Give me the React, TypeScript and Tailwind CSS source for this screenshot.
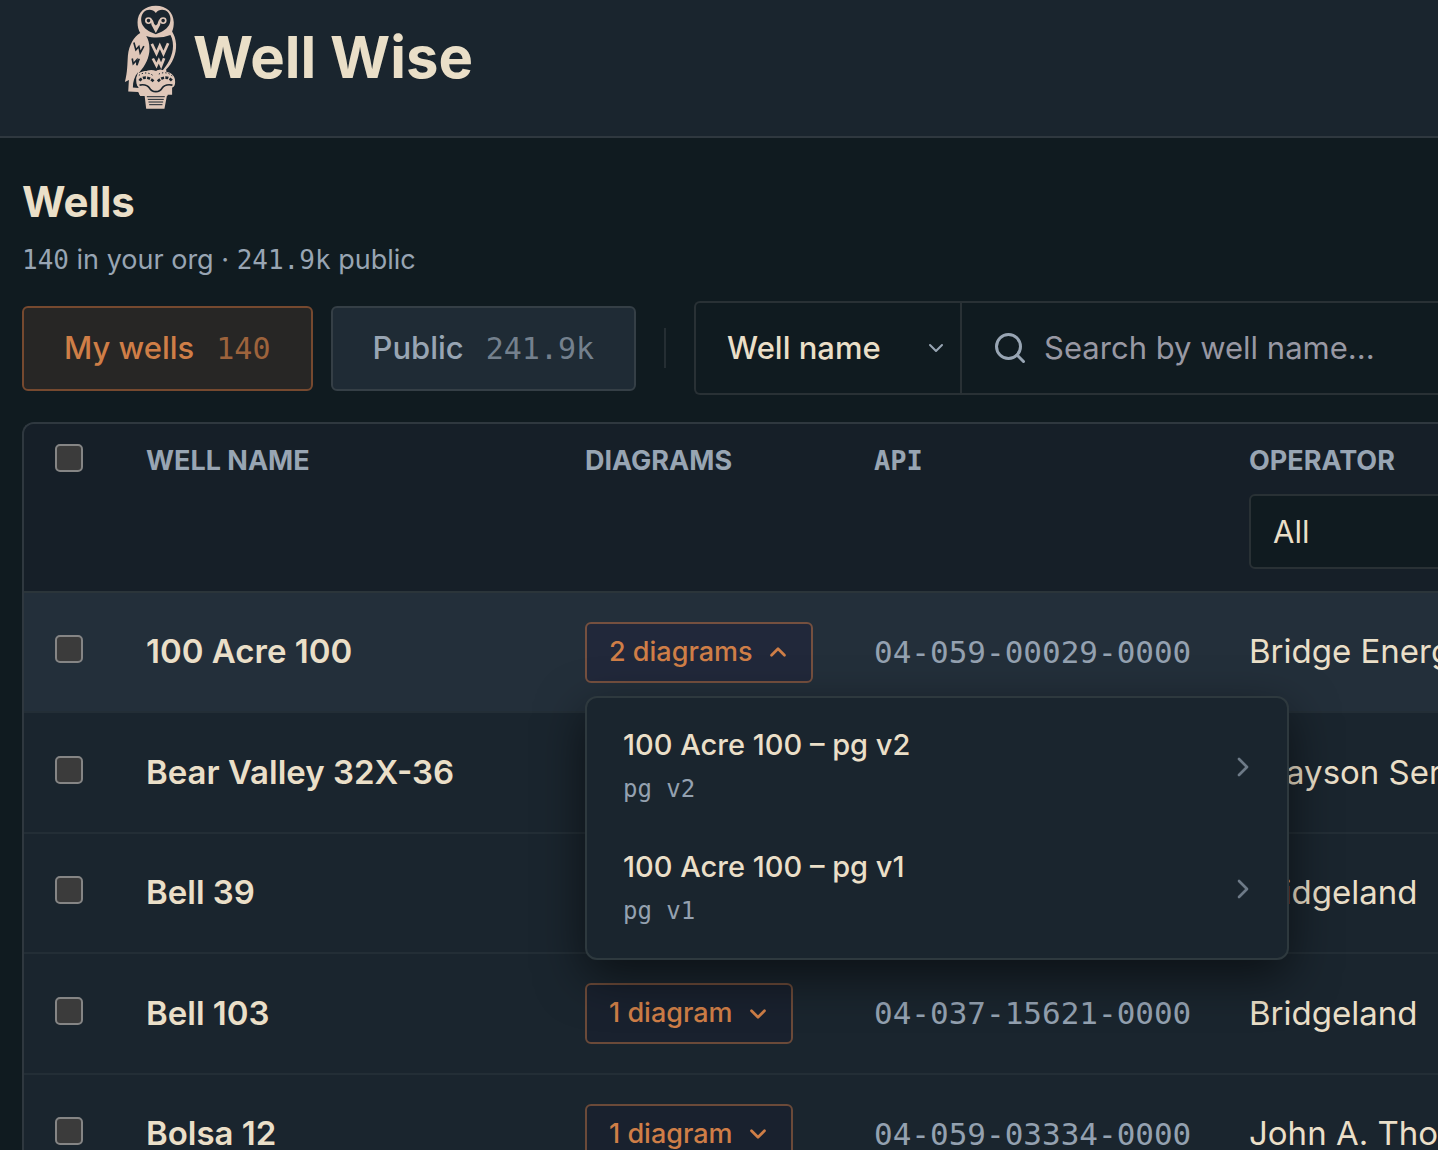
import { useState } from "react";
import { ChevronDown, ChevronRight, ChevronUp, Search } from "lucide-react";

type Diagram = { title: string; version: string };
type Well = {
  name: string;
  api?: string;
  operator: string;
  diagramLabel?: string;
  diagrams?: Diagram[];
};

const wells: Well[] = [
  {
    name: "100 Acre 100",
    api: "04-059-00029-0000",
    operator: "Bridge Energy",
    diagramLabel: "2 diagrams",
    diagrams: [
      { title: "100 Acre 100 – pg v2", version: "pg v2" },
      { title: "100 Acre 100 – pg v1", version: "pg v1" },
    ],
  },
  { name: "Bear Valley 32X-36", operator: "Grayson Service" },
  { name: "Bell 39", operator: "Bridgeland" },
  { name: "Bell 103", api: "04-037-15621-0000", operator: "Bridgeland", diagramLabel: "1 diagram" },
  { name: "Bolsa 12", api: "04-059-03334-0000", operator: "John A. Thomas", diagramLabel: "1 diagram" },
];

const mono = "font-['DejaVu_Sans_Mono',monospace]";

function OwlLogo() {
  return (
    <svg viewBox="42 14 158 316" className="h-[105px] w-[53px] shrink-0" aria-hidden="true">
      {/* body, wing and tail */}
      <path
        fill="#dfc7b9"
        d="M137 16C104 16 82 36 82 66C82 80 85 90 90 98C72 108 56 134 53 166C51 194 52 214 44 246L56 240L54 274L84 276L90 288L172 288L176 262L168 208C188 188 199 162 198 132C197 116 192 104 186 94C190 84 191 76 191 66C190 36 170 16 137 16Z"
      />
      {/* belly */}
      <path
        fill="#1a252e"
        d="M108 107C130 114 158 113 181 104C188 116 190 134 188 148C184 174 172 194 158 210C150 206 144 210 138 213C124 207 112 210 104 216L86 219C106 196 118 172 118 146C118 130 114 116 108 107Z"
      />
      {/* gap between the tail and the plinth */}
      <path fill="#1a252e" d="M84 216L78 234L80 254L86 264L68 262C68 246 72 230 84 216Z" />
      {/* face */}
      <path
        fill="#1a252e"
        d="M137 38C129 26 111 25 101 35C91 46 91 62 97 74C106 90 124 96 137 102C150 96 168 90 177 74C183 62 183 46 173 35C163 25 145 26 137 38Z"
      />
      <g fill="none" stroke="#dfc7b9" strokeWidth="5">
        <circle cx="115" cy="61" r="8" />
        <circle cx="159" cy="61" r="8" />
      </g>
      <path fill="#dfc7b9" d="M121 54C128 57 130 64 132 71L137 76L142 71C144 64 146 57 153 54L150 74L137 98L124 74Z" />
      {/* feather marks */}
      <g fill="none" strokeWidth="5">
        <path stroke="#1a252e" d="M71 127L77 149L86 139L90 158L101 138M66 175L69 191L80 179L80 195L87 176" />
        <path
          stroke="#dfc7b9"
          strokeWidth="8"
          d="M125 131L139 160L149 137L160 161L174 129M128 175L139 196L146 181L153 197L162 174"
        />
      </g>
      {/* plinth */}
      <path
        fill="#dfc7b9"
        d="M80 232C82 218 98 210 116 213C126 216 130 212 138 213C148 207 160 211 168 216C184 216 196 230 195 244C196 256 190 262 186 262L186 284H171L163 326H108L103 284H88L86 262C79 256 77 244 80 232Z"
      />
      <g fill="none" stroke="#1a252e" strokeWidth="5">
        <path d="M88 255C104 252 112 255 118 264C126 278 148 278 156 264C162 255 172 252 187 255" />
        <path strokeWidth="8" strokeDasharray="9 4" d="M88 242C98 228 116 230 131 244M143 244C156 230 174 228 186 242" />
        <path strokeWidth="3" strokeDasharray="4 6" d="M86 226C98 216 116 216 128 226M146 222C160 214 180 218 188 230" />
        <path strokeWidth="3" d="M110 290H164M113 298H161M115 306H159M117 314H157" />
      </g>
    </svg>
  );
}

function RowCheckbox({ label }: { label: string }) {
  return (
    <input
      type="checkbox"
      aria-label={label}
      className="block size-7 appearance-none rounded-[5px] border-2 border-[#858585] bg-[#3b3b3b] checked:bg-[#cf7e47]"
    />
  );
}

function DiagramMenu({ diagrams }: { diagrams: Diagram[] }) {
  return (
    <ul className="absolute top-full left-0 z-10 mt-[13px] w-[704px] rounded-xl border-2 border-[#2e393e] bg-[#1a252e] py-2 shadow-[0_16px_48px_rgba(0,0,0,0.55)]">
      {diagrams.map((d) => (
        <li key={d.version}>
          <button type="button" className="flex w-full items-center justify-between py-[17px] pr-7 pl-9 text-left">
            <span className="flex flex-col leading-[44px]">
              <span className="text-[29px] font-medium text-[#eadfc8]">{d.title}</span>
              <span className={`${mono} text-[24px] text-[#94a1b0]`}>{d.version}</span>
            </span>
            <ChevronRight className="size-8 text-[#6d7a87]" strokeWidth={2} />
          </button>
        </li>
      ))}
    </ul>
  );
}

function DiagramCell({ well, open, onToggle }: { well: Well; open: boolean; onToggle: () => void }) {
  if (!well.diagramLabel) return null;
  const Chevron = open ? ChevronUp : ChevronDown;
  return (
    <div className="relative w-max">
      <button
        type="button"
        aria-expanded={open}
        onClick={onToggle}
        className={`flex h-[61px] items-center gap-3 rounded-md border-2 pr-5 pl-[22px] text-[27px] font-medium whitespace-nowrap text-[#cf7e47] ${
          open ? "border-[#75503f] bg-[#21283a]" : "border-[#6b4a39] bg-[#19212e]"
        }`}
      >
        {well.diagramLabel}
        <Chevron className="size-[26px]" strokeWidth={2.5} />
      </button>
      {open && well.diagrams && <DiagramMenu diagrams={well.diagrams} />}
    </div>
  );
}

export default function App() {
  const [scope, setScope] = useState("mine");
  const [openWell, setOpenWell] = useState<string | null>("100 Acre 100");

  const tab = "flex h-[85px] shrink-0 items-center gap-[22px] rounded-md border-2 px-10 text-[31px] font-medium";
  const active = "border-[#76492f] bg-[#272625] text-[#cf7e47]";
  const idle = "border-[#353f46] bg-[#1f2b35] text-[#98a5b3]";

  return (
    <div className="h-screen overflow-hidden bg-[#101b20] font-['Inter',sans-serif] text-[#eadfc8]">
      <header className="flex h-[138px] items-start border-b-2 border-[#2f383f] bg-[#1a252e] pt-[5px] pl-[124px]">
        <a href="#" className="flex items-center gap-4 text-[58px] leading-[105px] font-bold">
          <OwlLogo />
          Well Wise
        </a>
      </header>

      <main className="pt-9 pl-[22px]">
        <h1 className="text-[42px] leading-[56px] font-bold">Wells</h1>
        <p className="mt-3 text-[27px] leading-9 text-[#98a5b3]">
          <span className={`${mono} text-[26px]`}>140</span> in your org ·{" "}
          <span className={`${mono} text-[26px]`}>241.9k</span> public
        </p>

        <div className="mt-[23px] flex items-center">
          <button type="button" onClick={() => setScope("mine")} className={`${tab} ${scope === "mine" ? active : idle}`}>
            My wells <span className={`${mono} text-[30px] opacity-70`}>140</span>
          </button>
          <button
            type="button"
            onClick={() => setScope("public")}
            className={`${tab} ml-[18px] ${scope === "public" ? active : idle}`}
          >
            Public <span className={`${mono} text-[30px] opacity-70`}>241.9k</span>
          </button>
          <div className="mx-7 h-10 w-0.5 shrink-0 bg-[#252e33]" />
          <div className="flex h-[94px] min-w-0 flex-1 rounded-l-md border-2 border-r-0 border-[#293135]">
            <div className="grid w-[266px] shrink-0 items-center border-r-2 border-[#293135]">
              <select
                aria-label="Search field"
                className="col-start-1 row-start-1 h-full w-full appearance-none bg-transparent pl-[31px] text-[31px] font-medium outline-none"
              >
                <option>Well name</option>
              </select>
              <ChevronDown className="pointer-events-none col-start-1 row-start-1 mr-3 size-6 justify-self-end text-[#98a5b3]" />
            </div>
            <label className="flex min-w-0 flex-1 items-center gap-4 pl-[30px]">
              <Search className="size-9 shrink-0 text-[#98a5b3]" strokeWidth={2} />
              <input
                type="search"
                aria-label="Search by well name"
                placeholder="Search by well name..."
                className="min-w-0 flex-1 bg-transparent text-[31px] outline-none placeholder:text-[#9898a3]"
              />
            </label>
          </div>
        </div>

        <div className="mt-[27px] overflow-hidden rounded-tl-xl border-t-2 border-l-2 border-[#2f383f] bg-[#1a252e]">
          <table className="w-full min-w-[1760px] table-fixed border-separate border-spacing-0 text-left">
            <colgroup>
              <col className="w-[91px]" />
              <col className="w-[439px]" />
              <col className="w-[289px]" />
              <col className="w-[375px]" />
              <col />
            </colgroup>
            <thead className="bg-[#161f28] align-top text-[27px] leading-[34px] text-[#98a5b3] uppercase">
              <tr className="*:border-b-2 *:border-[#2b353a] *:px-[31px] *:pt-5 *:pb-[22px] *:font-bold">
                <th>
                  <RowCheckbox label="Select all wells" />
                </th>
                <th>Well name</th>
                <th>Diagrams</th>
                <th className={mono}>API</th>
                <th>
                  <label htmlFor="operator">Operator</label>
                  <select
                    id="operator"
                    className="mt-4 block h-[75px] w-full appearance-none rounded-md border-2 border-[#293135] bg-[#101b20] px-[22px] text-[31px] font-normal text-[#eadfc8]"
                  >
                    <option>All</option>
                  </select>
                </th>
              </tr>
            </thead>
            <tbody>
              {wells.map((well) => (
                <tr
                  key={well.name}
                  className="h-[120px] *:border-b-2 *:border-[#232e36] *:px-[31px] even:h-[121px] first:bg-[#232f3a]"
                >
                  <td className="pb-1.5">
                    <RowCheckbox label={`Select ${well.name}`} />
                  </td>
                  <td className="text-[33px] font-semibold whitespace-nowrap">{well.name}</td>
                  <td>
                    <DiagramCell
                      well={well}
                      open={openWell === well.name}
                      onToggle={() => setOpenWell(openWell === well.name ? null : well.name)}
                    />
                  </td>
                  <td className={`${mono} text-[31px] whitespace-nowrap text-[#94a1b0]`}>{well.api}</td>
                  <td className="text-[33px] whitespace-nowrap">{well.operator}</td>
                </tr>
              ))}
            </tbody>
          </table>
        </div>
      </main>
    </div>
  );
}
